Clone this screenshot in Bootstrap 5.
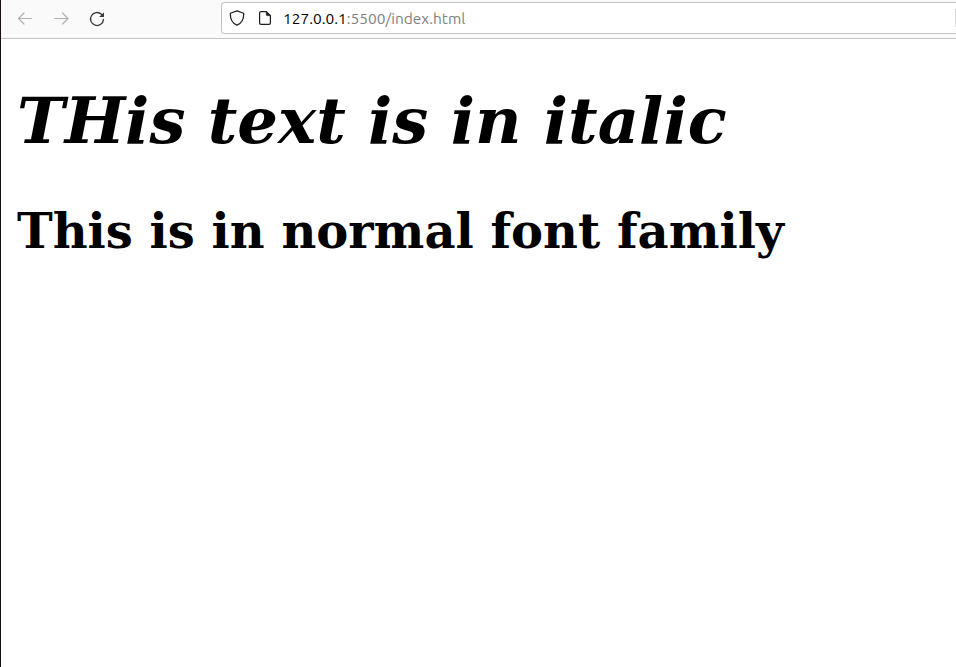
<!DOCTYPE html>
<html lang="en">
<head>
<meta charset="utf-8">
<title>index.html</title>
<link href="https://cdn.jsdelivr.net/npm/bootstrap@5.3.0/dist/css/bootstrap.min.css" rel="stylesheet">
<style>
body { border-left: 1px solid #170e17; color: #000; background: #fff; }
.toolbar { height: 39px; background: #fafafa; border-bottom: 1px solid #c3c3c3; padding: 2px 0 0 16px; }
.nav-icons { gap: 20px; width: 204px; height: 34px; }
.address { height: 32px; background: #fff; border: 1px solid #c2c2c4; border-right: 0; border-radius: 4px 0 0 4px; padding-left: 7px; }
.address svg + svg { margin-left: 12px; }
.url { font: 15.47px/30px "Ubuntu", "Noto Sans", sans-serif; margin-left: 10px; padding-top: 1px; color: #808080; white-space: pre; }
.url span { color: #000; }
.edge-mark { width: 1px; height: 18px; background: #ddd; }
.page { padding: 44px 16px 0; font-family: "DejaVu Serif", serif; }
.page h1 { font-size: 64px; line-height: 75px; margin-bottom: 45px; }
.page h2 { font-size: 48px; line-height: 56px; }
</style>
<script src="https://cdn.jsdelivr.net/npm/bootstrap@5.3.0/dist/js/bootstrap.bundle.min.js"></script>
</head>
<body class="min-vh-100 overflow-hidden">
<header class="toolbar d-flex align-items-start">
  <nav class="nav-icons d-flex align-items-center flex-shrink-0" aria-label="Browser navigation">
    <svg width="16" height="16" viewBox="0 0 16 16" fill="none" stroke="#b1b1b1" stroke-width="1.2" stroke-linecap="round" stroke-linejoin="round"><path d="M14.6 7.5H1.6M7 2 1.5 7.5 7 13"/></svg>
    <svg width="16" height="16" viewBox="0 0 16 16" fill="none" stroke="#b1b1b1" stroke-width="1.2" stroke-linecap="round" stroke-linejoin="round"><path d="M1.4 7.5h13M9.5 2 15 7.5 9.5 13"/></svg>
    <svg width="16" height="16" viewBox="0 0 16 16" fill="none" stroke="#39393b" stroke-width="1.3" stroke-linecap="round"><path d="M12.5 3.3A6.500 6.500 0 1 0 14.500 8.400"/><path d="M15 1.200v4.300a.5.5 0 0 1-.5.5h-4.300z" fill="#39393b" stroke="none"/></svg>
  </nav>
  <div class="address d-flex align-items-center flex-grow-1">
    <svg width="16" height="16" viewBox="0 0 16 16" fill="none" stroke="#202022" stroke-width="1.25" stroke-linejoin="round"><path d="M8 .8 14 3c.5.2.7.5.7 1 0 4.9-1.8 9.2-6.7 11.2C3.1 13.2 1.3 8.9 1.3 4c0-.5.2-.8.7-1z"/></svg>
    <svg width="16" height="16" viewBox="0 0 16 16" fill="none" stroke="#202022" stroke-width="1.25" stroke-linejoin="round"><path d="M9.3 1.6H4Q2.6 1.6 2.6 3v10q0 1.4 1.4 1.4h8q1.4 0 1.4-1.4V5.6z"/><path d="M9.3 1.6v3q0 1 1 1h3z" fill="#202022" stroke-width=".8"/></svg>
    <div class="url"><span>127.0.0.1</span>:5500/index.html</div>
    <div class="edge-mark ms-auto"></div>
  </div>
</header>
<main class="page">
  <h1 class="fw-bold fst-italic text-nowrap">THis text is in italic</h1>
  <h2 class="fw-bold mb-0 text-nowrap">This is in normal font family</h2>
</main>
</body>
</html>
